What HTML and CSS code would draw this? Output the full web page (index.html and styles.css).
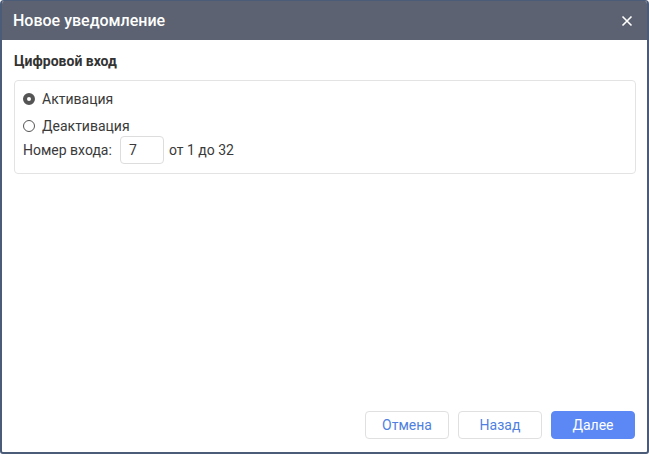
FILE: index.html
```html
<!DOCTYPE html>
<html lang="ru">
<head>
<meta charset="utf-8">
<link rel="stylesheet" href="styles.css">
</head>
<body>
<div class="dialog">
  <div class="header">
    <span class="title">Новое уведомление</span>
    <svg class="close" width="12" height="12" viewBox="0 0 12 12"><path d="M1.5 1.5 L10.5 10.5 M10.5 1.5 L1.5 10.5" stroke="#fff" stroke-width="1.6" fill="none"/></svg>
  </div>
  <div class="body">
    <div class="section-title">Цифровой вход</div>
    <div class="box">
      <label class="radio"><span class="dot checked"></span>Активация</label>
      <label class="radio"><span class="dot"></span>Деактивация</label>
      <div class="num-row">
        <span>Номер входа:</span>
        <span class="input">7</span>
        <span>от 1 до 32</span>
      </div>
    </div>
  </div>
  <div class="footer">
    <button class="btn">Отмена</button>
    <button class="btn">Назад</button>
    <button class="btn primary">Далее</button>
  </div>
</div>
</body>
</html>
```
FILE: styles.css
```css
* { box-sizing: border-box; }
html, body { margin: 0; padding: 0; }
body {
  width: 649px;
  height: 454px;
  font-family: Roboto, "Liberation Sans", Arial, sans-serif;
  color: #333;
  background: #fff;
}
.dialog {
  width: 649px;
  height: 454px;
  border: 2px solid #4b5c78;
  border-top-width: 1px;
  border-radius: 4px 4px 3px 3px;
  display: flex;
  flex-direction: column;
  overflow: hidden;
  background: #fff;
}
.header {
  height: 39px;
  background: #5c6271;
  display: flex;
  align-items: center;
  justify-content: space-between;
  padding: 0 14px 0 11px;
  flex-shrink: 0;
}
.title {
  color: #fff;
  font-size: 16px;
  font-weight: 500;
  letter-spacing: 0;
}
.close { display: block; }
.body {
  flex: 1;
  padding: 13px 12px 0 12px;
}
.section-title {
  font-size: 14px;
  font-weight: 700;
  color: #333;
  line-height: 16px;
  margin-left: 0;
}
.box {
  margin-top: 11px;
  margin-left: 0;
  width: 622px;
  height: 94px;
  border: 1px solid #e3e3e3;
  border-radius: 4px;
  padding: 9px 8px 0 8px;
  font-size: 14px;
  color: #3a3a3a;
}
.radio {
  display: flex;
  align-items: center;
  height: 18px;
  margin-bottom: 9px;
}
.dot {
  width: 12px;
  height: 12px;
  border-radius: 50%;
  border: 1px solid #555;
  margin-right: 7px;
  box-sizing: border-box;
}
.dot.checked {
  border: 4px solid #555;
  background: #fff;
}
.num-row {
  display: flex;
  align-items: center;
  margin-top: -8px;
}
.input {
  width: 44px;
  height: 28px;
  border: 1px solid #ddd;
  border-radius: 4px;
  margin: 0 5px 0 8px;
  padding-left: 8px;
  display: flex;
  align-items: center;
}
.footer {
  height: 52px;
  display: flex;
  justify-content: flex-end;
  gap: 9px;
  padding: 11px 12px 0 0;
  flex-shrink: 0;
}
.btn {
  width: 84px;
  height: 28px;
  border: 1px solid #e0e0e0;
  border-radius: 4px;
  background: #fff;
  color: #4f7fe0;
  font-family: Roboto, "Liberation Sans", Arial, sans-serif;
  font-size: 14px;
  padding: 0;
  cursor: pointer;
}
.btn.primary {
  background: #5b88f4;
  border-color: #5b88f4;
  color: #fff;
}
```
